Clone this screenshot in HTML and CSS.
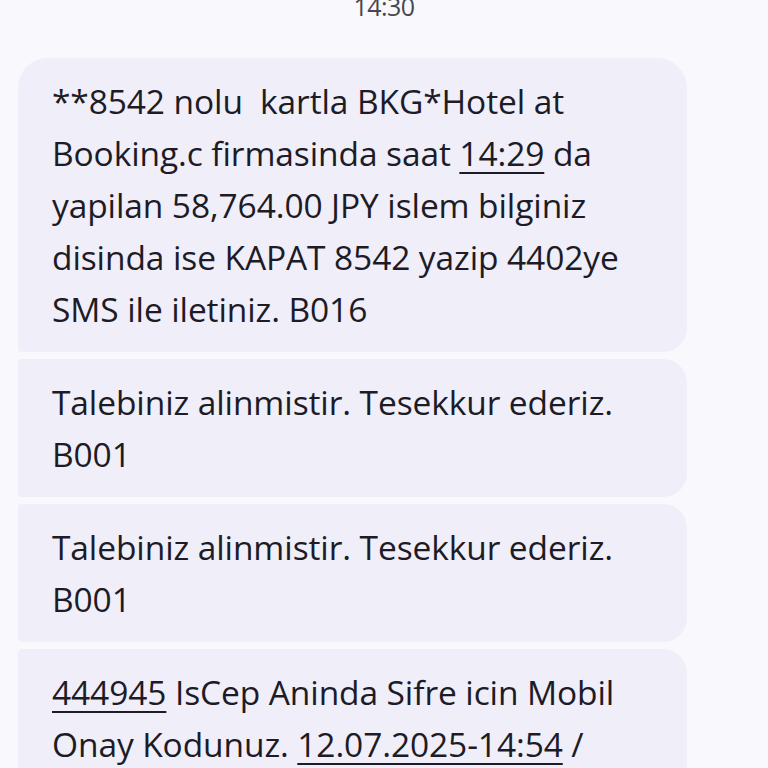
FILE: index.html
```html
<!DOCTYPE html>
<html>
<head>
<meta charset="utf-8">
<link rel="stylesheet" href="styles.css">
</head>
<body>
<div class="screen">
  <div class="time">14:30</div>
  <div class="thread">
    <div class="bubble first">**8542 nolu&nbsp; kartla BKG*Hotel at<br>Booking.c firmasinda saat <span class="link">14:29</span> da<br>yapilan 58,764.00 JPY islem bilginiz<br>disinda ise KAPAT 8542 yazip 4402ye<br>SMS ile iletiniz. B016</div>
    <div class="bubble">Talebiniz alinmistir. Tesekkur ederiz.<br>B001</div>
    <div class="bubble">Talebiniz alinmistir. Tesekkur ederiz.<br>B001</div>
    <div class="bubble last"><span class="link">444945</span> IsCep Aninda Sifre icin Mobil<br>Onay Kodunuz. <span class="link">12.07.2025-14:54</span> /</div>
  </div>
</div>
</body>
</html>
```
FILE: styles.css
```css
html, body {
  margin: 0;
  padding: 0;
  background: #f8f8fd;
  overflow: hidden;
}
.screen {
  width: 768px;
  height: 768px;
  overflow: hidden;
  font-family: "Open Sans", sans-serif;
  color: #1d1b26;
}
.time {
  text-align: center;
  font-size: 25px;
  line-height: 26px;
  color: #48474f;
  letter-spacing: -0.5px;
  margin-top: -7px;
  height: 65px;
}
.thread {
  display: flex;
  flex-direction: column;
  gap: 7px;
  padding-left: 18px;
}
.bubble {
  width: 669px;
  box-sizing: border-box;
  background: #efeef9;
  padding: 17px 10px 17px 34px;
  font-size: 33.5px;
  line-height: 52px;
  letter-spacing: -0.1px;
  white-space: nowrap;
  border-radius: 4px 24px 24px 4px;
}
.bubble.first {
  border-radius: 30px 30px 24px 4px;
}
.bubble.last {
  padding-bottom: 60px;
}
.link {
  text-decoration: underline;
  text-decoration-thickness: 2px;
  text-underline-offset: 6px;
}
```
